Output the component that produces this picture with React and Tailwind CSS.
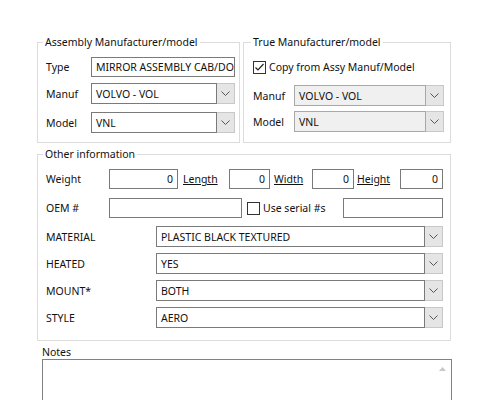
import React from 'react';

const Chevron = () => (
  <svg width="9" height="5" viewBox="0 0 9 5" className="block">
    <polyline points="0.5,0.5 4.5,4.5 8.5,0.5" fill="none" stroke="#555" strokeWidth="1" />
  </svg>
);

function Combo({ value, width, disabled, h = 'h-[21px]' }) {
  return (
    <div className={`flex ${h}`} style={{ width }}>
      <div className={`flex-1 flex items-center pl-[4px] border ${disabled ? 'bg-[#f0f0f0] border-[#a8a8a8]' : 'bg-white border-[#7a7a7a]'} whitespace-nowrap overflow-hidden`}>
        {value}
      </div>
      <div className="w-[18px] flex items-center justify-center bg-[#e5e5e5] border border-l-0 border-[#c8c8c8]">
        <Chevron />
      </div>
    </div>
  );
}

function TextBox({ value = '', width, right, h = 'h-[20px]' }) {
  return (
    <div
      className={`${h} flex items-center border border-[#7a7a7a] bg-white px-[4px] whitespace-nowrap overflow-hidden ${right ? 'justify-end' : ''}`}
      style={{ width }}
    >
      {value}
    </div>
  );
}

function Check({ checked }) {
  return (
    <div className="w-[13px] h-[13px] border border-[#333] bg-white flex items-center justify-center shrink-0">
      {checked && (
        <svg width="11" height="11" viewBox="0 0 11 11">
          <polyline points="1.5,5.5 4,8 9.5,2" fill="none" stroke="#222" strokeWidth="1.2" />
        </svg>
      )}
    </div>
  );
}

export default function App() {
  return (
    <div className="w-[500px] h-[400px] bg-white overflow-hidden text-[10.5px] leading-[16px] text-[#111] font-['Segoe_UI','Noto_Sans',sans-serif]">
      <div className="flex pt-[34px] pl-[37px] gap-[3px]">
        <fieldset className="w-[203px] h-[109px] border border-[#dcdcdc]">
          <legend className="ml-[5px] px-[2px]">Assembly Manufacturer/model</legend>
          <div className="pl-[8px] pt-[7px] flex flex-col">
            <div className="flex items-center">
              <span className="w-[45px]">Type</span>
              <TextBox value="MIRROR ASSEMBLY CAB/DO" width={144} />
            </div>
            <div className="flex items-center mt-[6px]">
              <span className="w-[45px]">Manuf</span>
              <Combo value="VOLVO - VOL" width={144} />
            </div>
            <div className="flex items-center mt-[8px]">
              <span className="w-[45px]">Model</span>
              <Combo value="VNL" width={144} />
            </div>
          </div>
        </fieldset>
        <fieldset className="w-[208px] h-[109px] border border-[#dcdcdc]">
          <legend className="ml-[7px] px-[2px]">True Manufacturer/model</legend>
          <div className="pl-[9px] pt-[9px] flex flex-col">
            <div className="flex items-center gap-[3px]">
              <Check checked />
              <span>Copy from Assy Manuf/Model</span>
            </div>
            <div className="flex items-center mt-[10px]">
              <span className="w-[41px]">Manuf</span>
              <Combo value="VOLVO - VOL" width={150} disabled />
            </div>
            <div className="flex items-center mt-[5px]">
              <span className="w-[41px]">Model</span>
              <Combo value="VNL" width={150} disabled />
            </div>
          </div>
        </fieldset>
      </div>

      <fieldset className="ml-[37px] mt-[3px] w-[414px] h-[195px] border border-[#dcdcdc]">
        <legend className="ml-[5px] px-[2px]">Other information</legend>
        <div className="pl-[8px] pt-[7px] flex flex-col">
          <div className="flex items-center">
            <span className="w-[63px]">Weight</span>
            <TextBox value="0" width={69} right />
            <span className="w-[51px] pl-[5px] underline">Length</span>
            <TextBox value="0" width={41} right />
            <span className="w-[42px] pl-[4px] underline">Width</span>
            <TextBox value="0" width={42} right />
            <span className="w-[46px] pl-[3px] underline">Height</span>
            <TextBox value="0" width={43} right />
          </div>
          <div className="flex items-center mt-[9px] w-[397px]">
            <span className="w-[63px]">OEM #</span>
            <TextBox width={133} />
            <div className="ml-[5px] flex items-center gap-[3px]">
              <Check />
              <span>Use serial #s</span>
            </div>
            <div className="ml-auto">
              <TextBox width={100} />
            </div>
          </div>
          {[
            ['MATERIAL', 'PLASTIC BLACK TEXTURED', 'mt-[8px]'],
            ['HEATED', 'YES', 'mt-[6px]'],
            ['MOUNT*', 'BOTH', 'mt-[6px]'],
            ['STYLE', 'AERO', 'mt-[6px]'],
          ].map(([label, value, mt]) => (
            <div key={label} className={`flex items-center ${mt}`}>
              <span className="w-[110px]">{label}</span>
              <Combo value={value} width={287} />
            </div>
          ))}
        </div>
      </fieldset>

      <div className="ml-[42px] mt-[4px] leading-[14px]">Notes</div>
      <div className="ml-[42px] w-[410px] h-[60px] border border-[#828282] bg-white flex justify-end">
        <div className="w-[17px] flex justify-center pt-[7px]">
          <svg width="7" height="4" viewBox="0 0 7 4">
            <polygon points="0,4 3.5,0 7,4" fill="#c8c8c8" />
          </svg>
        </div>
      </div>
    </div>
  );
}
